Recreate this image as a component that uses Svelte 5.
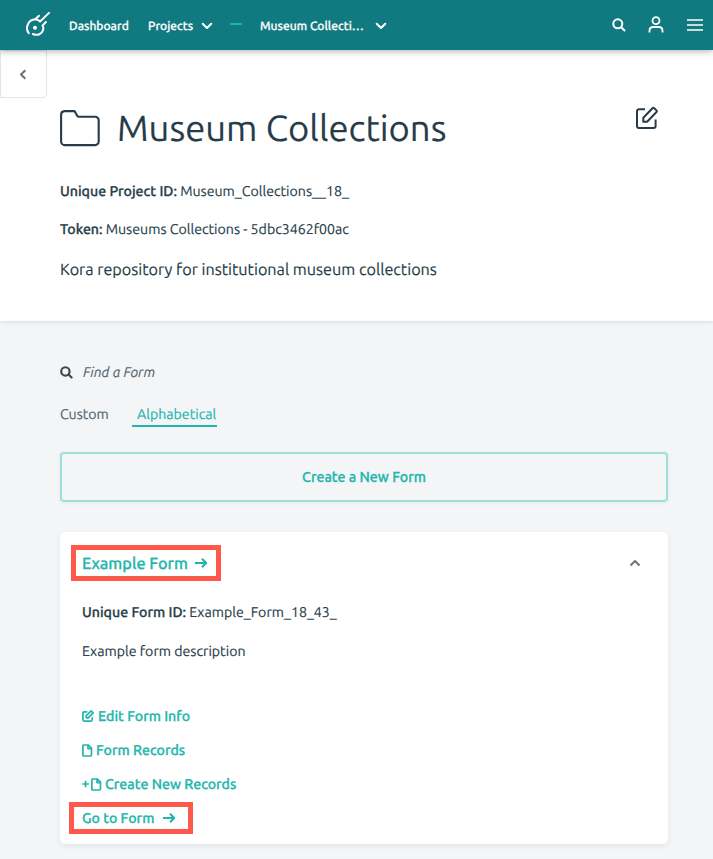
<script>
  const actions = [
    { icon: 'edit', label: 'Edit Form Info', cls: 'a-edit' },
    { icon: 'file', label: 'Form Records', cls: 'a-records' },
    { icon: 'plusfile', label: 'Create New Records', cls: 'a-create' }
  ];
</script>

{#snippet chevron()}
  <svg class="chev" width="12" height="8" viewBox="0 0 12 8"><path d="M1.7 1.7 6 6l4.3-4.3" /></svg>
{/snippet}

{#snippet arrow()}
  <svg class="arrow" width="14" height="12" viewBox="0 0 14 12"><path d="M1 6h11M8 1.8 12.2 6 8 10.2" /></svg>
{/snippet}

{#snippet search()}
  <svg width="14" height="14" viewBox="0 0 14 14"><circle cx="5.8" cy="5.8" r="4.5" /><path d="m9.2 9.2 3.3 3.3" stroke-linecap="round" /></svg>
{/snippet}

<div class="page">
  <nav>
    <svg class="logo" width="28" height="28" viewBox="0 0 28 28">
      <path d="M4.8 23.2A8.7 8.7 0 0 1 11.2 9.3L15 5.7M11.2 9.3q2.8 0 4.9 2.2L25 2.9M8.9 24c4.6 2.2 9.2-.2 10.2-4 .5-1.7.2-3-.6-4.4L21.9 12" />
      <circle cx="11" cy="17.7" r="2" />
    </svg>
    <span class="dash-link">Dashboard</span>
    <span class="projects">Projects</span>
    {@render chevron()}
    <i class="rule"></i>
    <span class="current">Museum Collecti…</span>
    {@render chevron()}
    <div class="tools">
      <span class="find">{@render search()}</span>
      <svg class="user" width="16" height="18" viewBox="0 0 16 18"><circle cx="8" cy="4.7" r="3.5" /><path d="M1.5 16.5v-1.8c0-2.4 1.4-3.7 3.7-3.7h5.6c2.3 0 3.7 1.3 3.7 3.7v1.8" /></svg>
      <svg class="menu" width="16" height="12" viewBox="0 0 16 12"><path d="M0 1h16M0 6h16M0 11h16" /></svg>
    </div>
  </nav>

  <header>
    <div class="back"><svg width="8" height="11" viewBox="0 0 8 11"><path d="M6.3 1.2 2 5.5l4.3 4.3" /></svg></div>
    <div class="title">
      <svg class="folder" width="40" height="37" viewBox="0 0 40 37"><path d="M4.5 1.1h9.3q.8 0 1.3.8l2.2 4q.5.8 1.4.8h16.4a3.6 3.6 0 0 1 3.6 3.6v21.2a3.6 3.6 0 0 1-3.6 3.6H4.7a3.6 3.6 0 0 1-3.6-3.6V4.7a3.6 3.6 0 0 1 3.4-3.6z" /></svg>
      <h1>Museum Collections</h1>
      <svg class="edit" width="24" height="24" viewBox="0 0 24 24"><path d="M10 3.2H4a2 2 0 0 0-2 2V20a2 2 0 0 0 2 2h14.6a2 2 0 0 0 2-2v-6.5M8.3 15.8v-4L17.5 2.2q.8-.8 1.7 0l2.3 2.2q.8.8 0 1.6l-9.4 9.8z" /></svg>
    </div>
    <p class="pid"><b>Unique Project ID:</b> <span>Museum_Collections__18_</span></p>
    <p class="token"><b>Token:</b> <span>Museums Collections - 5dbc3462f00ac</span></p>
    <p class="desc">Kora repository for institutional museum collections</p>
  </header>

  <main>
    <div class="filter">{@render search()}<em>Find a Form</em></div>
    <div class="tabs"><span class="custom">Custom</span><span class="active">Alphabetical</span></div>
    <button class="create"><span>Create a New Form</span></button>
    <section class="card">
      <div class="cardhead">
        <div class="mark top"><span>Example Form</span>{@render arrow()}</div>
        <svg class="up" width="12" height="8" viewBox="0 0 12 8"><path d="M1.5 6.5 6 2l4.5 4.5" /></svg>
      </div>
      <p class="fid"><b>Unique Form ID:</b> <span>Example_Form_18_43_</span></p>
      <p class="fdesc">Example form description</p>
      <div class="actions">
        {#each actions as a}
          <div class="action {a.cls}">
            {#if a.icon === 'edit'}
              <svg width="12" height="12" viewBox="0 0 12 12"><path d="M5.3 1.8H2.2q-1.3 0-1.3 1.3v6.7q0 1.3 1.3 1.3h6.7q1.3 0 1.3-1.3V7.2M4.3 7.8V5.7l4.9-4.8 1.9 1.9-4.8 5z" /></svg>
            {:else}
              {#if a.icon === 'plusfile'}
                <svg class="plus" width="9" height="12" viewBox="0 0 9 12"><path d="M.3 6h6.6M3.6 2.7v6.6" /></svg>
              {/if}
              <svg width="11" height="13" viewBox="0 0 11 13"><path d="M1.8 1h4.6l3.1 3.2v6.9q0 .9-.9.9H1.8q-.9 0-.9-.9V1.9q0-.9.9-.9zM6 1v3.6h3.5" /></svg>
            {/if}
            <span>{a.label}</span>
          </div>
        {/each}
      </div>
      <div class="mark bottom"><span>Go to Form</span>{@render arrow()}</div>
    </section>
  </main>
</div>

<style>
  .page {
    width: 713px;
    height: 859px;
    overflow: hidden;
    background: #f3f5f7;
    color: #273c48;
    font-family: Ubuntu, "Noto Sans", sans-serif;
    font-size: 14.17px;
    text-rendering: geometricPrecision;
    -webkit-text-stroke: 0.15px currentColor;
  }
  .page * { box-sizing: border-box; }
  svg { display: block; flex: none; fill: none; stroke: currentColor; stroke-width: 2; stroke-linejoin: round; }
  span, em, h1, p { white-space: nowrap; }
  nav {
    position: relative;
    z-index: 1;
    display: flex;
    align-items: center;
    height: 50px;
    padding: 2px 10px 0 24px;
    background: #117a80;
    color: #fff;
    font-size: 12.05px;
    font-weight: 500;
    box-shadow: 0 1px 7px rgba(30, 50, 60, 0.4);
    -webkit-text-stroke-width: 0.25px;
  }
  .logo { margin: -4px 17px 0 0; stroke-linecap: round; }
  .logo circle { fill: #fff; stroke: none; }
  .dash-link { width: 79px; }
  .projects { width: 52.5px; }
  .current { width: 115px; }
  .chev { stroke-linecap: round; margin-top: -1px; }
  .rule { width: 12px; height: 2px; margin: -4px 18px 0 17.5px; background: #22b5ad; }
  .tools { display: flex; align-items: center; margin: -3px 0 0 auto; }
  .find { margin-right: 22px; }
  .user { margin-right: 23px; stroke-width: 1.8; }
  .menu { stroke-width: 1.7; }

  header { height: 271px; background: #fff; box-shadow: 0 1px 4px rgba(30, 50, 60, 0.13); }
  .back {
    display: flex;
    align-items: center;
    justify-content: center;
    width: 47px;
    height: 48px;
    border: 1px solid #e3e6e8;
    border-radius: 0 0 4px 0;
    color: #68757d;
  }
  .back svg { stroke-width: 2.1; margin-right: 1px; }
  .title { display: flex; height: 75px; padding: 0 54px 0 60px; }
  .folder { margin-top: 12px; stroke-width: 2.1; }
  h1 { margin: 0 0 0 17px; font-size: 36.4px; font-weight: 400; line-height: 60px; letter-spacing: 0; }
  .edit { margin: 8px 0 0 auto; }
  p { margin: 0; padding-left: 60px; }
  b, .create, .mark, .actions { -webkit-text-stroke-width: 0.3px; }
  b { font-weight: 500; }
  .pid, .token { height: 38px; line-height: 37px; }
  .desc { line-height: 42px; font-size: 16.2px; }

  main { padding: 41px 45px 0 60px; }
  .filter { display: flex; align-items: center; height: 20px; color: #46545b; }
  .filter em { margin-left: 10px; font-size: 14px; color: #53646d; }
  .filter svg { color: #3e4649; width: 13px; height: 13px; stroke-width: 2.3; }
  .tabs { display: flex; height: 70px; padding-top: 20px; line-height: 24px; color: #53646d; }
  .custom { width: 72px; }
  .active { width: 85px; height: 25px; padding-left: 5px; color: #22b5ad; border-bottom: 2px solid #22b5ad; }
  .create {
    display: block;
    width: 608px;
    height: 50px;
    padding: 0;
    border: 2px solid #a0ded9;
    border-radius: 4px;
    background: #f3f5f6;
    color: #22b5ad;
    font: inherit;
    font-weight: 500;
    box-shadow: 0 1px 4px rgba(30, 60, 70, 0.06);
  }
  .card {
    display: flex;
    flex-direction: column;
    align-items: flex-start;
    width: 608px;
    height: 312px;
    margin-top: 30px;
    padding: 13px 0 0 9px;
    border-radius: 5px;
    background: #fff;
    box-shadow: 0 2px 5px rgba(30, 60, 70, 0.08);
  }
  .cardhead { display: flex; justify-content: space-between; width: 100%; padding: 0 27px 0 2px; }
  .mark { display: flex; align-items: center; border: 5px solid #ff594b; color: #22b5ad; font-weight: 500; }
  .top { width: 150px; height: 36px; padding-left: 6px; font-size: 16.2px; }
  .top span { width: 112px; padding-top: 1px; }
  .top svg { margin-top: -1px; }
  .bottom { width: 124px; height: 32px; margin-top: 1px; padding-left: 8px; }
  .bottom span { width: 80px; }
  .bottom svg { margin-top: -1px; }
  .up { margin-top: 14px; color: #68757d; }
  .card p { padding-left: 13px; }
  .fid { height: 40px; line-height: 62px; }
  .card .fdesc { margin-top: 10px; height: 58px; line-height: 40px; }
  .actions { padding: 10px 0 0 13px; color: #22b5ad; font-weight: 500; }
  .action { display: flex; align-items: center; height: 34px; }
  .action svg { stroke-width: 1.7; }
  .a-edit span { margin-left: 4px; }
  .a-records span, .a-create span { margin-left: 3px; }
</style>
